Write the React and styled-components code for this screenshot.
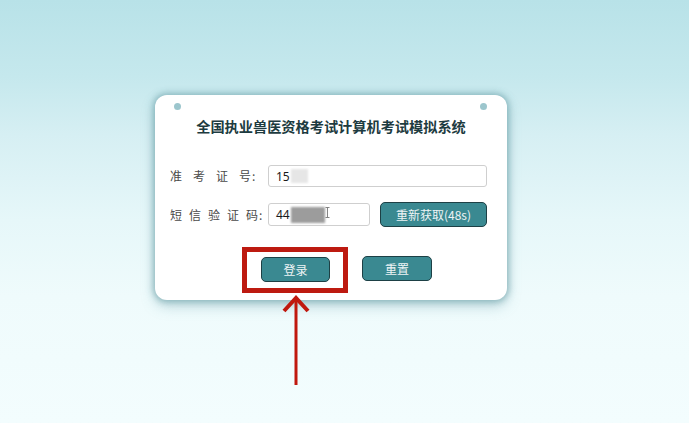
import React from "react";
import styled, { createGlobalStyle } from "styled-components";

const Global = createGlobalStyle`
  html, body { margin: 0; padding: 0; }
  body {
    font-family: "Noto Sans CJK SC", "Noto Sans", sans-serif;
    background: linear-gradient(180deg, #b8e2e8 0%, #c5e8ed 18%, #d6eff3 32%, #e6f7f9 52%, #effbfc 70%, #f3fdfe 100%);
    min-height: 100vh;
  }
`;

const Page = styled.div`
  min-height: 423px;
  padding: 95px 0 0 155px;
  box-sizing: border-box;
`;

const Card = styled.div`
  position: relative;
  width: 352px;
  height: 205px;
  box-sizing: border-box;
  padding: 20px 20px 18px 15px;
  background: #fff;
  border-radius: 12px;
  box-shadow: 0 0 6px 2px rgba(92, 150, 158, 0.55), 0 6px 14px rgba(90, 150, 160, 0.35);
  display: flex;
  flex-direction: column;
`;

const Dot = styled.span`
  position: absolute;
  top: 8px;
  ${(p) => (p.$side === "left" ? "left: 19px;" : "right: 20px;")}
  width: 7px;
  height: 7px;
  border-radius: 50%;
  background: #9cc6cd;
`;

const Title = styled.h1`
  margin: 0;
  font-size: 14.2px;
  line-height: 22px;
  font-weight: 700;
  color: #1d3b40;
  text-align: center;
  padding-left: 5px;
`;

const Divider = styled.div`
  height: 1px;
  background: #e3e3e3;
  margin: 11px 2px 17px 6px;
`;

const Row = styled.div`
  display: flex;
  align-items: center;
  height: ${(p) => p.$h}px;
  margin-bottom: ${(p) => p.$mb || 0}px;
`;

const Label = styled.div`
  width: 98px;
  flex: none;
  display: flex;
  align-items: center;
  gap: ${(p) => p.$gap}px;
  font-size: 12px;
  color: #4a4a4a;
  line-height: 1;
`;

const Colon = styled.span`
  margin-left: 1px;
`;

const Field = styled.div`
  box-sizing: border-box;
  width: ${(p) => (p.$w ? `${p.$w}px` : "auto")};
  flex: ${(p) => (p.$w ? "none" : 1)};
  height: ${(p) => p.$h}px;
  border: 1px solid #cfcfcf;
  border-radius: 3px;
  display: flex;
  align-items: center;
  padding-left: 7px;
  font-size: 12px;
  font-family: "Noto Sans", "Liberation Sans", sans-serif;
  color: #1a1a1a;
  position: relative;
`;

const Mask = styled.span`
  display: inline-block;
  width: ${(p) => p.$w}px;
  height: ${(p) => p.$h}px;
  background: ${(p) => p.$c};
  filter: blur(1.2px);
  margin-left: 1px;
`;

const Caret = styled.svg`
  position: absolute;
  left: 56px;
  top: 3px;
`;

const TealButton = styled.button`
  box-sizing: border-box;
  width: ${(p) => p.$w}px;
  height: 25px;
  margin-left: ${(p) => p.$ml || 0}px;
  background: #3a8991;
  border: 1px solid #1d4045;
  border-radius: 5px;
  color: #eef4f5;
  font-family: "Noto Sans CJK SC", "Noto Sans", sans-serif;
  font-size: 12px;
  padding: 0;
  cursor: pointer;
`;

const Actions = styled.div`
  display: flex;
  gap: 32px;
  margin-top: 29px;
  padding-left: 91px;
`;

const Highlight = styled.div`
  position: relative;
`;

const RedBox = styled.span`
  position: absolute;
  left: -19px;
  top: -9px;
  width: 106px;
  height: 46px;
  box-sizing: border-box;
  border: 5px solid #bd1a10;
  pointer-events: none;
`;

const Arrow = styled.svg`
  position: absolute;
  left: 22px;
  top: 39px;
  overflow: visible;
`;

function SpacedLabel({ chars, gap }) {
  return (
    <Label $gap={gap}>
      {chars.map((c, i) => (
        <span key={i}>
          {c}
          {i === chars.length - 1 && <Colon>:</Colon>}
        </span>
      ))}
    </Label>
  );
}

export default function App() {
  return (
    <>
      <Global />
      <Page>
        <Card>
          <Dot $side="left" />
          <Dot $side="right" />
          <Title>全国执业兽医资格考试计算机考试模拟系统</Title>
          <Divider />
          <Row $h={22} $mb={15}>
            <SpacedLabel chars={["准", "考", "证", "号"]} gap={11} />
            <Field $h={22}>
              15
              <Mask $w={17} $h={14} $c="#e6e6e6" />
            </Field>
          </Row>
          <Row $h={25}>
            <SpacedLabel chars={["短", "信", "验", "证", "码"]} gap={7} />
            <Field $h={23} $w={102}>
              44
              <Mask $w={34} $h={16} $c="#9c9c9c" />
              <Caret width="5" height="11" viewBox="0 0 5 11">
                <path d="M0.5 0.5h4M2.5 0.5v10M0.5 10.5h4" stroke="#777" strokeWidth="0.9" fill="none" />
              </Caret>
            </Field>
            <TealButton $w={107} $ml={10}>重新获取(48s)</TealButton>
          </Row>
          <Actions>
            <Highlight>
              <TealButton $w={69}>登录</TealButton>
              <RedBox />
              <Arrow width="30" height="92" viewBox="0 0 30 92">
                <path d="M13 2 V90" stroke="#c0180e" strokeWidth="3" fill="none" />
                <path d="M1 16 L13 3 L25 16" stroke="#c0180e" strokeWidth="4" fill="none" strokeLinejoin="miter" />
              </Arrow>
            </Highlight>
            <TealButton $w={70}>重置</TealButton>
          </Actions>
        </Card>
      </Page>
    </>
  );
}
